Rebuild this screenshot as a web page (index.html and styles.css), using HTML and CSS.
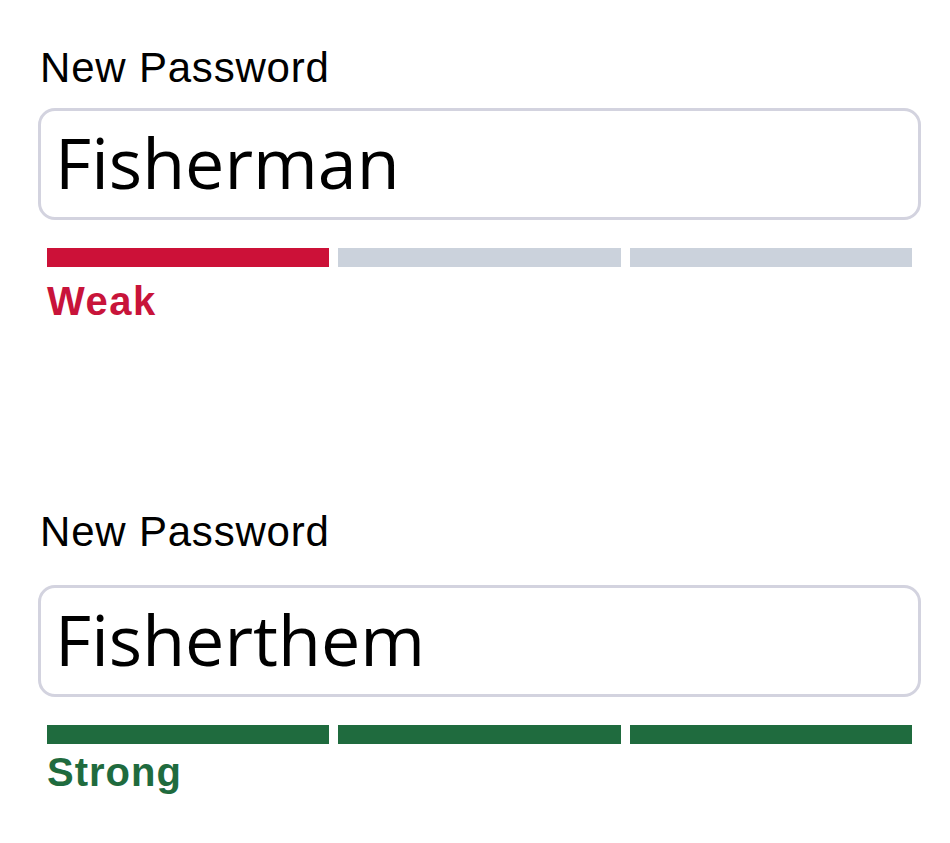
FILE: index.html
```html
<!DOCTYPE html>
<html lang="en">
<head>
  <meta charset="UTF-8" />
  <meta name="viewport" content="width=device-width, initial-scale=1.0" />
  <title>Password strength</title>
  <link rel="stylesheet" href="styles.css">
</head>
<body>
  <div class="page">

    <div class="field field-weak">
      <label class="field-label" for="pass1">New Password</label>
      <input class="field-input" id="pass1" type="text" value="Fisherman" readonly />
      <div class="meter">
        <span class="meter-seg on"></span>
        <span class="meter-seg"></span>
        <span class="meter-seg"></span>
      </div>
      <div class="meter-text">Weak</div>
    </div>

    <div class="field field-strong">
      <label class="field-label" for="pass2">New Password</label>
      <input class="field-input" id="pass2" type="text" value="Fisherthem" readonly />
      <div class="meter">
        <span class="meter-seg on"></span>
        <span class="meter-seg on"></span>
        <span class="meter-seg on"></span>
      </div>
      <div class="meter-text">Strong</div>
    </div>

  </div>
</body>
</html>
```

FILE: styles.css
```css
/* medidor de senha */

body {
  margin: 0;
  background: #fff;
  font-family: "Liberation Sans", Arial, sans-serif;
}

.page {
  padding: 47px 29px 40px 38px;
}

.field-label {
  display: block;
  margin-left: 2px;
  font-size: 42px;
  line-height: 42px;
  letter-spacing: 0.8px;
  color: #000;
}

.field-input {
  display: block;
  box-sizing: border-box;
  width: 100%;
  height: 112px;
  margin-top: 19px;
  padding: 0 14px 5px;
  border: 3px solid #d3d3df;
  border-radius: 17px;
  background: #fff;
  font-family: "Open Sans", sans-serif;
  font-size: 70px;
  color: #000;
  outline: none;
}

.meter {
  display: flex;
  gap: 9px;
  margin: 28px 9px 0;
}

.meter-seg {
  flex: 1;
  height: 19px;
  background: #cbd2dc;
}

.meter-text {
  margin: 14px 0 0 9px;
  font-size: 40px;
  line-height: 48px;
  font-weight: bold;
  letter-spacing: 1.5px;
}

.field-weak .meter-seg.on { background: #cc1138; }
.field-weak .meter-text { color: #c8143a; margin-top: 10px; }

.field-strong { margin-top: 186px; }
.field-strong .field-input { margin-top: 32px; }
.field-strong .meter-text { margin-top: 4px; letter-spacing: 1px; }
.field-strong .meter-seg.on { background: #1f6b3e; }
.field-strong .meter-text { color: #1f6b3e; }
```
